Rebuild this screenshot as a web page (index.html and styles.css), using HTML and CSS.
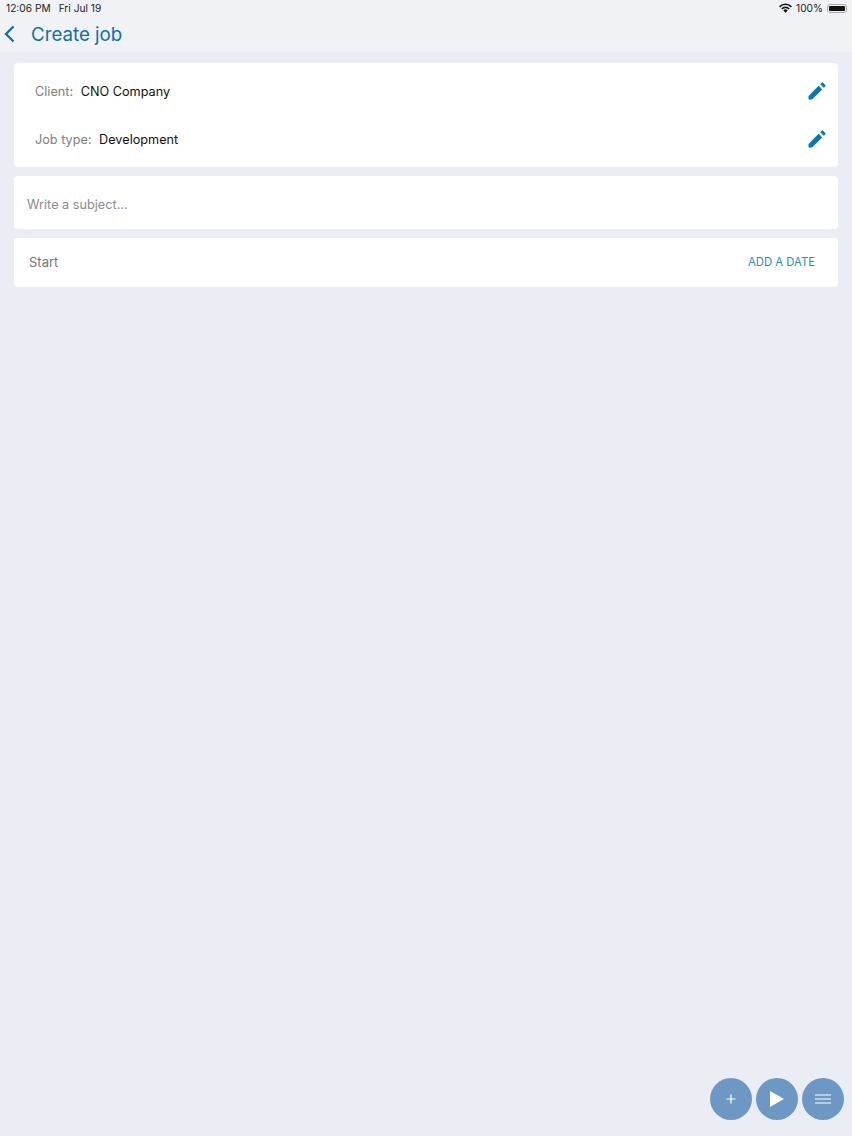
FILE: index.html
```html
<!DOCTYPE html>
<html lang="en">
<head>
  <meta charset="UTF-8">
  <title>Create job</title>
  <link rel="stylesheet" href="styles.css">
</head>
<body>
  <header class="cabecalho">
    <div class="status">
      <div class="status-lado">
        <span>12:06 PM</span>
        <span>Fri Jul 19</span>
      </div>
      <div class="status-lado status-direita">
        <svg class="wifi" width="13" height="10" viewBox="0 0 13 10">
          <path d="M0 3.2a9 9 0 0 1 13 0l-1.2 1.2a7.3 7.3 0 0 0-10.6 0z" fill="#111"/>
          <path d="M2.2 5.4a5.9 5.9 0 0 1 8.6 0L9.6 6.6a4.2 4.2 0 0 0-6.2 0z" fill="#111"/>
          <path d="M4.3 7.5a3 3 0 0 1 4.4 0L6.5 9.8z" fill="#111"/>
        </svg>
        <span>100%</span>
        <div class="bateria"><div class="bateria-carga"></div></div>
      </div>
    </div>
    <div class="titulo-linha">
      <svg class="voltar" width="11" height="18" viewBox="0 0 11 18">
        <path d="M9.5 1.5 2 9l7.5 7.5" fill="none" stroke="#0f6fa6" stroke-width="2.3"/>
      </svg>
      <h1>Create job</h1>
    </div>
  </header>

  <main class="conteudo">
    <section class="cartao cartao-info">
      <div class="linha">
        <span class="rotulo">Client:</span>
        <span class="valor">CNO Company</span>
        <svg class="lapis" width="18" height="18" viewBox="0 0 18 18">
          <path d="M.5 17.5v-3.6L10.6 3.8l3.6 3.6L4.1 17.5z" fill="#0f76ae"/>
          <path d="M12.2 2.2 13.7.7a1 1 0 0 1 1.4 0l2.2 2.2a1 1 0 0 1 0 1.4l-1.5 1.5z" fill="#0f76ae"/>
        </svg>
      </div>
      <div class="linha">
        <span class="rotulo">Job type:</span>
        <span class="valor">Development</span>
        <svg class="lapis" width="18" height="18" viewBox="0 0 18 18">
          <path d="M.5 17.5v-3.6L10.6 3.8l3.6 3.6L4.1 17.5z" fill="#0f76ae"/>
          <path d="M12.2 2.2 13.7.7a1 1 0 0 1 1.4 0l2.2 2.2a1 1 0 0 1 0 1.4l-1.5 1.5z" fill="#0f76ae"/>
        </svg>
      </div>
    </section>

    <section class="cartao cartao-assunto">Write a subject...</section>

    <section class="cartao cartao-data">
      <span>Start</span>
      <span class="adicionar">ADD A DATE</span>
    </section>
  </main>

  <div class="botoes">
    <div class="botao">
      <svg width="12" height="12" viewBox="0 0 12 12">
        <path d="M6 1.5v9M1.5 6h9" stroke="#fff" stroke-width="1.2"/>
      </svg>
    </div>
    <div class="botao">
      <svg width="14" height="16" viewBox="0 0 14 16">
        <path d="M0 0 14 8 0 16z" fill="#fff"/>
      </svg>
    </div>
    <div class="botao">
      <svg width="16" height="10" viewBox="0 0 16 10">
        <path d="M0 1h16M0 5h16M0 9h16" stroke="#fff" stroke-width="1.2"/>
      </svg>
    </div>
  </div>
</body>
</html>
```

FILE: styles.css
```css
body {
  margin: 0;
  height: 1136px;
  font-family: 'Inter', 'Liberation Sans', sans-serif;
  background: #eaedf3;
  position: relative;
  overflow: hidden;
}

.cabecalho {
  height: 52px;
  background: #f0f2f5;
}

.status {
  display: flex;
  justify-content: space-between;
  align-items: center;
  height: 16px;
  padding: 0 5px 0 6px;
  font-size: 10.2px;
  color: #222;
}

.status-lado {
  display: flex;
  align-items: center;
  gap: 8px;
}

.status-direita {
  gap: 4px;
}

.bateria {
  width: 20px;
  height: 9px;
  padding: 1px;
  border: 1px solid #aaa;
  border-radius: 3px;
  box-sizing: border-box;
  display: flex;
}

.bateria-carga {
  flex: 1;
  background: #111;
  border-radius: 1px;
}

.titulo-linha {
  display: flex;
  align-items: center;
  height: 36px;
  padding-left: 4px;
}

.titulo-linha h1 {
  margin: 0 0 0 16px;
  font-size: 18.7px;
  font-weight: 400;
  color: #0f6fa6;
}

.conteudo {
  display: flex;
  flex-direction: column;
  gap: 9px;
  padding: 11px 14px 0;
}

.cartao {
  background: white;
  border-radius: 4px;
  box-sizing: border-box;
}

.cartao-info {
  height: 104px;
  padding: 4px 12px 4px 21px;
  display: flex;
  flex-direction: column;
}

.linha {
  flex: 1;
  display: flex;
  align-items: center;
  gap: 7.5px;
  font-size: 12.7px;
}

.rotulo {
  color: #808080;
}

.valor {
  color: #111;
}

.lapis {
  margin-left: auto;
}

.cartao-assunto {
  height: 53px;
  padding: 3px 0 0 13px;
  display: flex;
  align-items: center;
  font-size: 12.7px;
  color: #8c8c8c;
}

.cartao-data {
  height: 49px;
  padding: 0 23px 2px 15px;
  display: flex;
  align-items: center;
  justify-content: space-between;
  font-size: 13px;
  color: #777;
}

.adicionar {
  font-size: 11.3px;
  color: #2a8dbd;
}

.botoes {
  position: absolute;
  right: 8px;
  bottom: 16px;
  display: flex;
  gap: 4px;
}

.botao {
  width: 42px;
  height: 42px;
  border-radius: 50%;
  background: #6d98c4;
  display: flex;
  justify-content: center;
  align-items: center;
}
```
